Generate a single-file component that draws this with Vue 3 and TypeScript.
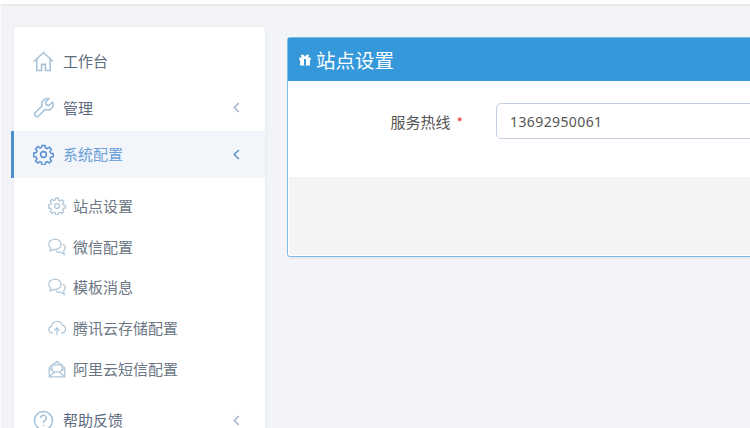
<script setup lang="ts">
interface Item { label: string; icon: string; arrow?: boolean; active?: boolean }
const top: Item[] = [
  { label: '工作台', icon: 'home' },
  { label: '管理', icon: 'wrench', arrow: true },
  { label: '系统配置', icon: 'gear', arrow: true, active: true },
]
const subs: Item[] = [
  { label: '站点设置', icon: 'gear' },
  { label: '微信配置', icon: 'chat' },
  { label: '模板消息', icon: 'chat' },
  { label: '腾讯云存储配置', icon: 'cloud' },
  { label: '阿里云短信配置', icon: 'mail' },
]
const paths: Record<string, string> = {
  home: 'M1 11 11 1.500 21 11M4 8.500V20.500h5v-6.500h4v6.500h5V8.500',
  wrench: 'M20.500 5.500 16.600 9l-2.800-.8-.8-2.800 3.600-3.500a5.600 5.600 0 0 0-7 7.300L2 16.800a2.600 2.600 0 0 0 3.400 3.600l7.400-7.500a5.600 5.600 0 0 0 7.700-7.400Z',
  gear: 'M9.400 1.500h3.200l.5 2.700 1.600.7 2.300-1.500 2.300 2.300-1.500 2.300.7 1.600 2.700.5v3.200l-2.700.5-.7 1.600 1.500 2.300-2.300 2.300-2.300-1.500-1.600.7-.5 2.700H9.400l-.5-2.700-1.600-.7-2.300 1.500-2.300-2.300 1.500-2.300-.7-1.600-2.700-.5V9.400l2.700-.5.7-1.600-1.500-2.300 2.300-2.300 2.300 1.500 1.600-.7ZM8 11a3 3 0 1 0 6 0 3 3 0 0 0-6 0Z',
  chat: 'M8.500 1.500c4.300 0 7.500 2.800 7.500 6.300s-3.200 6.300-7.500 6.300c-.8 0-1.500-.1-2.200-.3L2.500 16l.9-3.800C1.900 11 1 9.500 1 7.800 1 4.300 4.200 1.500 8.500 1.500ZM18 7.500c1.900 1 3 2.600 3 4.400 0 1.500-.7 2.800-1.900 3.700l.7 4.400-3.800-2.500c-2.400.5-4.600-.1-6-1.600',
  cloud: 'M6 17H5a4.200 4.200 0 0 1-.6-8.300A6.800 6.800 0 0 1 17.500 7.500 4.800 4.800 0 0 1 17 17h-1M11 20v-9M7.800 14 11 10.800l3.200 3.200',
  mail: 'M1.500 9.500 11 1.500l9.500 8V20.500h-19ZM1.500 10l7 5.500M20.500 10l-7 5.500M1.500 20.500l7-6h5l7 6M5 12V6h12v6',
}
</script>

<template>
  <div class="page">
    <div class="topbar"></div>
    <div class="content">
      <aside class="sidebar">
        <div
          v-for="item in top"
          :key="item.label"
          class="row"
          :class="{ active: item.active }"
        >
          <svg class="icon" viewBox="0 0 22 22"><path :d="paths[item.icon]" /></svg>
          <span class="label">{{ item.label }}</span>
          <svg v-if="item.arrow" class="chev" viewBox="0 0 7 11"><path d="M5.800 1 1.300 5.500l4.500 4.500" /></svg>
        </div>
        <div class="subs">
          <div v-for="s in subs" :key="s.label" class="subrow">
            <svg class="subicon" viewBox="0 0 22 22"><path :d="paths[s.icon]" /></svg>
            <span class="sublabel">{{ s.label }}</span>
          </div>
        </div>
        <div class="row">
          <svg class="icon" viewBox="0 0 22 22">
            <circle cx="11" cy="11" r="9.500" />
            <path d="M8 8.500a3 3 0 1 1 4.600 2.500c-1 .6-1.600 1.200-1.600 2.500M11 15.500v1.500" />
          </svg>
          <span class="label">帮助反馈</span>
          <svg class="chev" viewBox="0 0 7 11"><path d="M5.800 1 1.300 5.500l4.500 4.500" /></svg>
        </div>
      </aside>
      <main class="main">
        <section class="box">
          <header class="box-head">
            <svg class="gift" viewBox="0 0 12 12">
              <path d="M.3 3.400h11.400v2.900h-.8v5.200H1.100V6.300H.3ZM2.400 .7c1-.6 2.700.3 3.600 2.100C6.900 1 8.600 .1 9.600 .7c.8.600.3 2-1 2.700H3.400C2.100 2.700 1.600 1.300 2.400 .7Z" />
              <rect class="ribbon" x="5" y="5" width="2" height="6.500" />
            </svg>
            <span class="title">站点设置</span>
          </header>
          <div class="box-body">
            <label class="field-label">服务热线<i class="star">*</i></label>
            <input class="field-input" value="13692950061" readonly />
          </div>
          <div class="box-foot"></div>
        </section>
      </main>
    </div>
  </div>
</template>

<style>
html, body { margin: 0; background: #f2f4f8; overflow: hidden; }
</style>

<style scoped>
.page {
  width: 750px;
  height: 428px;
  overflow: hidden;
  background: #f2f4f8;
  font-family: "Noto Sans CJK SC", "Noto Sans", sans-serif;
}
.topbar {
  height: 4px;
  background: #fff;
  border-bottom: 1px solid #e6e8ec;
  box-shadow: 0 1px 2px rgba(0, 0, 0, 0.05);
}
.content {
  display: flex;
  align-items: flex-start;
  padding: 22px 0 0 13px;
  border-left: 1px solid #fafbfc;
}
.sidebar {
  flex: 0 0 251px;
  height: 430px;
  padding-top: 11px;
  box-sizing: border-box;
  background: #fff;
  border-radius: 4px;
  box-shadow: 0 0 4px rgba(40, 60, 90, 0.08);
}
.row {
  display: flex;
  align-items: center;
  height: 46.500px;
  padding-left: 19px;
  color: #5d6d7e;
  font-size: 15px;
  position: relative;
}
.row.active {
  background: #f2f5f9;
  color: #6a9fd8;
}
.row.active::before {
  content: "";
  position: absolute;
  left: -3px;
  top: 0;
  bottom: 0;
  width: 3px;
  background: #4a90d0;
}
.icon {
  width: 21px;
  height: 21px;
  margin-right: 10px;
  fill: none;
  stroke: #a6c2d9;
  stroke-width: 1.600;
}
.row.active .icon { stroke: #5b93d3; }
.label { flex: 1; margin-left: -1px; padding-bottom: 1px; }
.chev {
  width: 7px;
  height: 11px;
  margin-right: 25px;
  fill: none;
  stroke: #9fb3c8;
  stroke-width: 1.500;
}
.row.active .chev { stroke: #5b8fc9; }
.subs { padding: 8px 0; }
.subrow {
  display: flex;
  align-items: center;
  height: 40.700px;
  padding-left: 34px;
  color: #6b7785;
  font-size: 15px;
}
.subicon {
  width: 18px;
  height: 18px;
  margin-right: 7px;
  fill: none;
  stroke: #aec6d9;
  stroke-width: 1.500;
}
.sublabel { padding-bottom: 1px; }
.main {
  flex: 1;
  min-width: 0;
  margin-left: 22px;
  margin-top: 10px;
  overflow: hidden;
  padding-bottom: 6px;
}
.box {
  width: 700px;
  height: 220px;
  box-sizing: border-box;
  border: 1px solid #7dbbe8;
  border-radius: 3px 0 0 3px;
  background: #fff;
  box-shadow: 0 1px 3px rgba(0, 0, 0, 0.08);
  display: flex;
  flex-direction: column;
}
.box-head {
  height: 43px;
  background: #3498db;
  color: #fff;
  display: flex;
  align-items: center;
  padding-left: 11px;
  gap: 5px;
}
.title { font-size: 19.500px; }
.gift { width: 12px; height: 12px; fill: #fff; }
.ribbon { fill: #3498db; }
.box-body {
  height: 96px;
  display: flex;
  align-items: center;
  padding-bottom: 16px;
  box-sizing: border-box;
}
.field-label {
  width: 175px;
  flex: none;
  text-align: right;
  font-size: 15px;
  color: #555;
  margin-right: 33px;
  white-space: nowrap;
}
.star {
  margin-left: 6px;
  color: #e4393c;
  font-style: normal;
  font-size: 14px;
}
.field-input {
  width: 400px;
  height: 36px;
  box-sizing: border-box;
  border: 1px solid #c3d0e0;
  border-radius: 5px;
  padding: 0 13px;
  font: 14px "Noto Sans", sans-serif;
  letter-spacing: 0.4px;
  color: #555;
  outline: none;
}
.box-foot {
  flex: 1;
  margin: 0 0 1px 1px;
  background: #f4f4f4;
}
</style>
